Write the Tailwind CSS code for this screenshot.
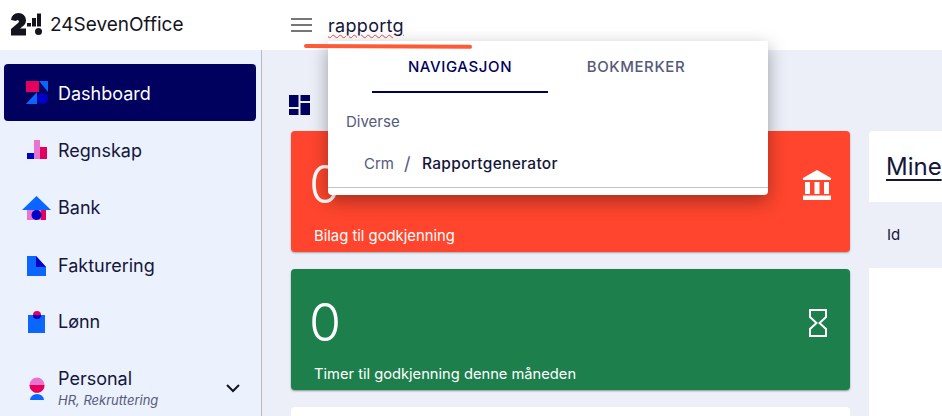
<!DOCTYPE html>
<html>
<head>
<meta charset="utf-8">
<script src="https://cdn.jsdelivr.net/npm/@tailwindcss/browser@4"></script>
</head>
<body class="m-0">
<div class="relative w-[942px] h-[416px] overflow-hidden bg-[#eceff8] font-['Inter','Noto_Sans',sans-serif] text-[#14163a]">
  <header class="h-[50px] bg-white flex items-center">
    <div class="w-[262px] flex items-center pl-[11px] pr-0">
      <svg width="32" height="24" viewBox="0 0 32 24" class="shrink-0">
        <path d="M0 7 A7.500 7 0 0 1 7.500 0 A7.500 7 0 0 1 15 7 Q15 11 11.500 13.500 L9 15.500 H15 V22.500 H0 V16 L7 10 Q8.500 8.500 7.500 7.500 Q6.500 6.500 5.500 7.500 L5 8 Z" fill="#14141f"/>
        <rect x="16" y="10" width="4" height="3.500" fill="#14141f"/><rect x="21" y="5" width="4" height="8.500" fill="#14141f"/><rect x="26" y="0.500" width="4" height="13" fill="#14141f"/>
        <circle cx="27.500" cy="18.500" r="3.500" fill="#14141f"/>
      </svg>
      <span class="ml-[7px] text-[19px] text-[#14141f]">24SevenOffice</span>
    </div>
    <div class="ml-[29px] flex flex-col gap-[4px] w-[21px] shrink-0">
      <span class="block h-[2px] bg-[#777]"></span><span class="block h-[2px] bg-[#777]"></span><span class="block h-[2px] bg-[#777]"></span>
    </div>
    <span class="ml-[16px] text-[18px] tracking-[0.3px] text-[#14163a] underline decoration-wavy decoration-[#e44] decoration-1 underline-offset-2">rapportg</span>
  </header>

  <div class="flex h-[366px]">
    <aside class="w-[262px] shrink-0 bg-[#ebf1fd] border-r border-[#b9b9bf] pl-[4px] pr-[5px] pt-[14px]">
      <nav class="flex flex-col text-[18px]">
        <a class="h-[57px] rounded-[4px] bg-[#00005e] flex items-center pl-[22px] text-white pt-[2px]">
          <svg width="24" height="24" viewBox="0 0 24 24" class="mr-[8px] shrink-0 mt-[-2px]"><rect x="0" y="0" width="13" height="11" fill="#e5005e"/><path d="M13 0H22V11Z" fill="#0a66ff"/><path d="M0 23L11 11V23Z" fill="#0a66ff"/><circle cx="16.500" cy="17.500" r="5.500" fill="#0000c8"/></svg>
          Dashboard
        </a>
        <a class="h-[57px] flex items-center pl-[20px] pt-[2px]">
          <svg width="34" height="24" viewBox="0 0 34 24" class="shrink-0"><rect x="10" y="1" width="6" height="19" fill="#e874d0"/><rect x="16" y="8" width="7" height="12" fill="#e5005e"/><rect x="3" y="14" width="7" height="6" fill="#0000c8"/></svg>
          Regnskap
        </a>
        <a class="h-[57px] flex items-center pl-[14px] pt-[2px]">
          <svg width="40" height="26" viewBox="0 0 40 26" class="shrink-0"><rect x="9" y="14" width="14" height="11" fill="#e874d0"/><rect x="23" y="14" width="5" height="11" fill="#e5005e"/><path d="M4 15 L18.500 1 L33 15Z" fill="#0a66ff"/><circle cx="18.500" cy="20" r="5" fill="#0000c8"/></svg>
          Bank
        </a>
        <a class="h-[57px] flex items-center pl-[19px] pt-[4px]">
          <svg width="35" height="22" viewBox="0 0 35 22" class="shrink-0"><path d="M4 1H13L23 12V21H4Z" fill="#0a66ff"/><path d="M13 1L23 12H13Z" fill="#0000c8"/></svg>
          Fakturering
        </a>
        <a class="h-[57px] flex items-center pl-[19px] pt-[2px]">
          <svg width="35" height="24" viewBox="0 0 35 24" class="shrink-0"><rect x="5" y="5" width="17" height="18" fill="#0a66ff"/><circle cx="14" cy="5" r="4" fill="#e5005e"/><path d="M10 5A4 4 0 0 0 18 5Z" fill="#0000c8"/></svg>
          Lønn
        </a>
        <div class="h-[57px] flex items-center pl-[19px] pt-[24px]">
          <svg width="35" height="24" viewBox="0 0 35 24" class="shrink-0 mt-[-2px]"><circle cx="14" cy="8" r="7.500" fill="#e874d0"/><path d="M6.500 8H21.500A7.500 7.500 0 0 1 7 11Z" fill="#e5005e"/><path d="M7 23A7 6 0 0 1 21 23Z" fill="#0a66ff"/></svg>
          <div class="flex-1">
            <div class="leading-[22px]">Personal</div>
            <div class="text-[13px] italic leading-[21px] text-[#55597a]">HR, Rekruttering</div>
          </div>
          <svg width="16" height="10" viewBox="0 0 16 10" class="mr-[15px] mt-[-4px] shrink-0"><path d="M2 2L8 8L14 2" fill="none" stroke="#14141f" stroke-width="2"/></svg>
        </div>
      </nav>
    </aside>

    <main class="flex-1 min-w-0 overflow-hidden pl-[27px] pt-[45px] flex flex-col">
      <svg width="22" height="21" viewBox="0 0 22 21" class="block shrink-0"><rect x="0" y="0" width="9.500" height="12" fill="#00005e"/><rect x="0" y="14" width="9.500" height="6" fill="#00005e"/><rect x="11.500" y="0" width="9.500" height="6" fill="#00005e"/><rect x="11.500" y="8" width="9.500" height="12" fill="#00005e"/></svg>
      <div class="flex gap-[19px] mt-[15px] ml-[2px] shrink-0">
        <div class="w-[559px] shrink-0 flex flex-col gap-[17px]">
          <div class="h-[121px] rounded-[4px] bg-[#ff452d] shadow-[0_1px_2px_rgba(0,0,0,0.3)] text-white flex flex-col justify-between pl-[18px] pr-[18px]">
            <div class="flex items-center justify-between pt-[26px]">
              <span class="text-[52px] leading-[56px] font-light">0</span>
              <svg width="30" height="30" viewBox="0 0 30 30"><path d="M15 0L29 8V10H1V8Z" fill="#fff"/><rect x="3" y="12" width="5" height="12" fill="#fff"/><rect x="12.500" y="12" width="5" height="12" fill="#fff"/><rect x="22" y="12" width="5" height="12" fill="#fff"/><rect x="1" y="25.500" width="28" height="4.500" fill="#fff"/></svg>
            </div>
            <div class="text-[14.800px] leading-[20px] pb-[6px] pl-[5px]">Bilag til godkjenning</div>
          </div>
          <div class="h-[121px] rounded-[4px] bg-[#1d7f4c] shadow-[0_1px_2px_rgba(0,0,0,0.4)] text-white flex flex-col justify-between pl-[18px] pr-[23px]">
            <div class="flex items-center justify-between pt-[26px]">
              <span class="text-[52px] leading-[56px] font-light">0</span>
              <svg width="18" height="28" viewBox="0 0 18 28"><path d="M1 1H17V8L10.500 14L17 20V27H1V20L7.500 14L1 8Z" fill="none" stroke="#fff" stroke-width="2"/></svg>
            </div>
            <div class="text-[14.700px] leading-[20px] pb-[6px] pl-[5px]">Timer til godkjenning denne måneden</div>
          </div>
          <div class="h-[60px] rounded-[4px] bg-white"></div>
        </div>
        <div class="w-[200px] shrink-0 h-[400px] rounded-t-[4px] bg-white overflow-hidden">
          <div class="h-[71px] pl-[17px] pt-[20px] text-[24px] leading-[32px] whitespace-nowrap text-[#14163a]"><span class="underline underline-offset-4">Mine</span></div>
          <div class="h-[66px] bg-[#eceff8] pl-[18px] flex items-center text-[15px]">Id</div>
        </div>
      </div>
    </main>
  </div>

  <div class="absolute left-[328px] top-[41px] w-[440px] h-[154px] bg-white rounded-b-[4px] shadow-[0_6px_18px_rgba(0,0,0,0.35)]">
    <div class="flex pl-[44px]">
      <div class="w-[176px] h-[52px] border-b-2 border-[#00005e] text-center text-[#00005e] text-[15px] font-medium tracking-[0.6px] leading-[52px]">NAVIGASJON</div>
      <div class="w-[176px] h-[52px] text-center text-[#55597a] text-[15px] font-medium tracking-[0.6px] leading-[52px]">BOKMERKER</div>
    </div>
    <div class="pl-[18px] pt-[19px] text-[15px] leading-[20px] text-[#55597a]">Diverse</div>
    <div class="pl-[36px] pt-[22px] h-[56px] flex items-start text-[15px] leading-[20px] border-b border-[#c3c3cb]">
      <span class="text-[#55597a] w-[40px]">Crm</span><span class="text-[#55597a] text-[18px] w-[18px]">/</span><span class="text-[#14163a] font-medium text-[15.500px] tracking-[0.3px]">Rapportgenerator</span>
    </div>
  </div>

  <div class="absolute left-[304px] top-[44px] w-[168px] h-[4px] rounded-full bg-[#ff5a36] origin-left rotate-[0.3deg]"></div>
</div>
</body>
</html>
